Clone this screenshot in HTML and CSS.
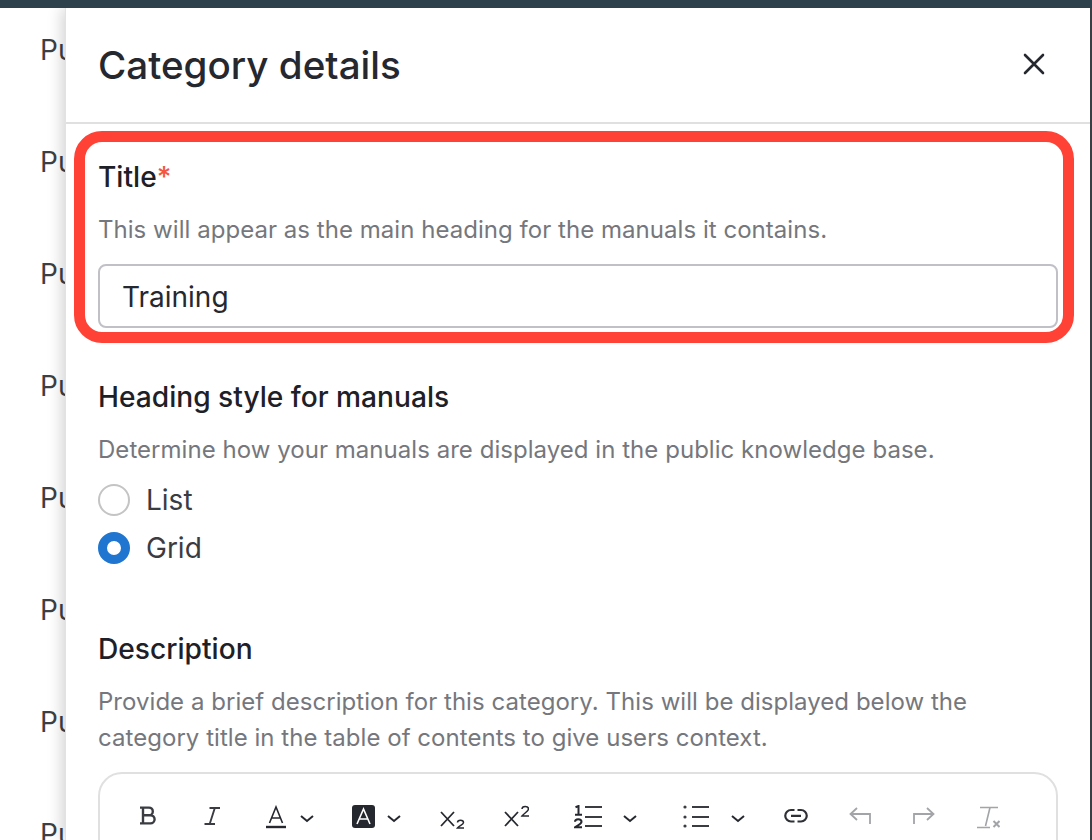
FILE: index.html
```
<!DOCTYPE html>
<html lang="en">
<head>
<meta charset="utf-8">
<title>Category details</title>
<link rel="stylesheet" href="styles.css">
</head>
<body>
<div class="topbar"></div>
<div class="stage">
  <div class="behind">
    <div class="behind-row">Public</div>
    <div class="behind-row">Public</div>
    <div class="behind-row">Public</div>
    <div class="behind-row">Public</div>
    <div class="behind-row">Public</div>
    <div class="behind-row">Public</div>
    <div class="behind-row">Public</div>
    <div class="behind-row">Public</div>
  </div>
  <aside class="panel">
    <header class="panel-head">
      <h1 class="panel-title">Category details</h1>
      <svg class="close" viewBox="0 0 22 22" width="22" height="22"><path d="M2 2 20 20M20 2 2 20" fill="none" stroke="#26282f" stroke-width="2.600" stroke-linecap="round"/></svg>
    </header>
    <div class="panel-body">
      <section class="field title-field">
        <div class="highlight"></div>
        <h2 class="label">Title<span class="req">*</span></h2>
        <p class="hint">This will appear as the main heading for the manuals it contains.</p>
        <div class="input">Training</div>
      </section>
      <section class="field style-field">
        <h2 class="label">Heading style for manuals</h2>
        <p class="hint">Determine how your manuals are displayed in the public knowledge base.</p>
        <div class="radio-row"><span class="radio"></span>List</div>
        <div class="radio-row"><span class="radio on"></span>Grid</div>
      </section>
      <section class="field desc-field">
        <h2 class="label">Description</h2>
        <p class="hint hint-long">Provide a brief description for this category. This will be displayed below the category title in the table of contents to give users context.</p>
        <div class="editor">
          <div class="toolbar">
            <svg viewBox="0 0 16 24" width="16" height="24"><path d="M0 2.600h9a3.800 3.800 0 0 1 0 7.600H3M3 10.200h7.500a4 4 0 0 1 0 8.200H0M3 2.600v15.800" fill="none" stroke="#3a3c42" stroke-width="2.400"/></svg>
            <svg class="m9" viewBox="0 0 16 24" width="16" height="24"><path d="M5.500 3h10.500M0.500 19h10.500M10.800 3 5.700 19" fill="none" stroke="#3a3c42" stroke-width="1.900"/></svg>
            <span class="tool-group m7">
              <svg viewBox="0 0 20 24" width="20" height="24"><path d="M3.500 18 10 2l6.500 16M5.500 13h9" fill="none" stroke="#26282f" stroke-width="1.600"/><path d="M0 22h20" stroke="#26282f" stroke-width="2.400"/></svg>
              <svg viewBox="0 0 14 24" width="14" height="24"><path d="M1 11 7 16l6-5" fill="none" stroke="#26282f" stroke-width="2"/></svg>
            </span>
            <span class="tool-group g12 back1">
              <svg viewBox="0 0 23 24" width="23" height="24"><rect width="23" height="23" rx="3" fill="#26282f"/><path d="M5 19 11.500 4 18 19M7 14h9" fill="none" stroke="#fff" stroke-width="1.600"/></svg>
              <svg viewBox="0 0 14 24" width="14" height="24"><path d="M1 11 7 16l6-5" fill="none" stroke="#26282f" stroke-width="2"/></svg>
            </span>
            <svg viewBox="0 0 25 24" width="25" height="24"><path d="M1 7 14 21M14 7 1 21" fill="none" stroke="#26282f" stroke-width="1.800"/><path d="M17.500 17.500c0-3 6-3 6 0 0 2-4 3-6 5.500h6.500" fill="none" stroke="#26282f" stroke-width="1.500"/></svg>
            <svg viewBox="0 0 25 24" width="25" height="24"><path d="M1 7 14 21M14 7 1 21" fill="none" stroke="#26282f" stroke-width="1.800"/><path d="M18 4c0-3.500 6.500-3.500 6.500 0 0 2.500-4.500 4-6.500 7h7" fill="none" stroke="#26282f" stroke-width="1.500"/></svg>
            <span class="tool-group g21 m6">
              <svg viewBox="0 0 28 24" width="28" height="24"><path d="M1.500 2.200 4.500 1v9M1 9.700h7M1 16.800c0-3.400 6.500-3.400 6.500 0 0 2.500-4 3.500-6.500 5.400h7" fill="none" stroke="#26282f" stroke-width="2"/><path d="M11 2h17M11 12h17M11 21h17" stroke="#3a3c42" stroke-width="2.200"/></svg>
              <svg viewBox="0 0 14 24" width="14" height="24"><path d="M1 11 7 16l6-5" fill="none" stroke="#26282f" stroke-width="2"/></svg>
            </span>
            <span class="tool-group g22 m7">
              <svg viewBox="0 0 26 24" width="26" height="24"><circle cx="2" cy="2" r="1.600" fill="#3a3c42"/><circle cx="2" cy="12" r="1.600" fill="#3a3c42"/><circle cx="2" cy="21" r="1.600" fill="#3a3c42"/><path d="M9 2h17M9 12h17M9 21h17" stroke="#3a3c42" stroke-width="2.200"/></svg>
              <svg viewBox="0 0 14 24" width="14" height="24"><path d="M1 11 7 16l6-5" fill="none" stroke="#26282f" stroke-width="2"/></svg>
            </span>
            <svg viewBox="0 0 24 24" width="24" height="24"><path d="M10.500 5H7a5.700 5.700 0 0 0 0 11.500h3.500M13.500 5H17a5.700 5.700 0 0 1 0 11.500h-3.500M7 10.800h10" fill="none" stroke="#2e3036" stroke-width="2.200"/></svg>
            <svg class="m2" viewBox="0 0 22 24" width="22" height="24"><path d="M8 3 1.500 9 8 15M1.500 9H21v10" fill="none" stroke="#a2a4a8" stroke-width="1.800"/></svg>
            <svg class="m3" viewBox="0 0 22 24" width="22" height="24"><path d="M14 3l6.500 6L14 15M20.500 9H1v10" fill="none" stroke="#a2a4a8" stroke-width="1.800"/></svg>
            <svg class="m3" viewBox="0 0 23 24" width="23" height="24"><path d="M3 2.500h18M0 22.500h13M13 2.500 8.500 21" fill="none" stroke="#a2a4a8" stroke-width="1.600"/><path d="M16.500 16l6 6M22.500 16l-6 6" fill="none" stroke="#a2a4a8" stroke-width="2"/></svg>
          </div>
        </div>
      </section>
    </div>
  </aside>
</div>
```
FILE: styles.css
```
* { box-sizing: border-box; }
html, body { margin: 0; height: 100%; overflow: hidden; background: #fff; }
body { font-family: Inter, "Liberation Sans", sans-serif; color: #26282f; display: flex; flex-direction: column; }
.topbar { height: 8px; flex: none; background: #2d414d; }
.stage { flex: 1; min-height: 0; display: flex; overflow: hidden; border-right: 2px solid #3a3f44; }
.behind { width: 65px; flex: none; overflow: hidden; padding: 24px 0 0 40px; background: #fff; }
.behind-row { height: 112px; font-size: 28px; line-height: 36px; color: #3d3f45; white-space: nowrap; }
.panel { width: 1025px; flex: none; background: #fff; box-shadow: -3px 0 14px rgba(0,0,0,.18); border-left: 1px solid #e2e2e2; position: relative; }
.panel-head { height: 116px; border-bottom: 2px solid #e0e0e0; display: flex; align-items: center; justify-content: space-between; padding: 0 45px 0 32px; }
.panel-title { margin: 0; font-size: 38.600px; font-weight: 500; line-height: 48px; color: #26282f; }
.close { flex: none; position: relative; top: -1px; }
.panel-body { padding: 0 32px; }
.field { position: relative; }
.title-field { padding-top: 35px; }
.title-field .hint { margin-top: 17px; }
.highlight { position: absolute; left: -24px; right: -16px; top: 7px; height: 212px; border: 11px solid #ff4235; border-radius: 28px; pointer-events: none; }
.label { margin: 0; font-size: 28.150px; line-height: 36px; font-weight: 500; color: #1e2027; }
.req { color: #f4563f; }
.hint { margin: 18px 0 0; font-size: 24px; line-height: 36px; color: #75777d; letter-spacing: .04px; }
.input { margin-top: 16px; height: 64px; border: 2px solid #c0c0c6; border-radius: 8px; padding-left: 22px; font-size: 28px; line-height: 62px; color: #26282f; }
.style-field { padding-top: 51px; }
.style-field .hint { margin: 17px 0 8px; }
.radio-row { display: flex; align-items: center; gap: 16px; height: 48px; font-size: 28px; color: #3a3c42; }
.radio { width: 32px; height: 32px; border: 2px solid #c4c4c4; border-radius: 50%; flex: none; background: #fff; }
.radio.on { border: 9.500px solid #1f75cf; }
.desc-field { padding-top: 59px; }
.hint-long { width: 900px; margin-top: 17px; }
.editor { margin-top: 16px; height: 120px; border: 2px solid #e0e0e0; border-radius: 24px 24px 0 0; padding: 21px 0 0 40px; }
.toolbar { display: flex; align-items: center; gap: 39px; height: 44px; }
.tool-group { display: flex; align-items: center; gap: 14px; }
.g12 { gap: 12px; }
.g21 { gap: 21px; }
.g22 { gap: 22px; }
.back1 { margin-left: -1px; }
.m2 { margin-left: 2px; }
.m3 { margin-left: 3px; }
.m6 { margin-left: 6px; }
.m7 { margin-left: 7px; }
.m9 { margin-left: 9px; }
```
